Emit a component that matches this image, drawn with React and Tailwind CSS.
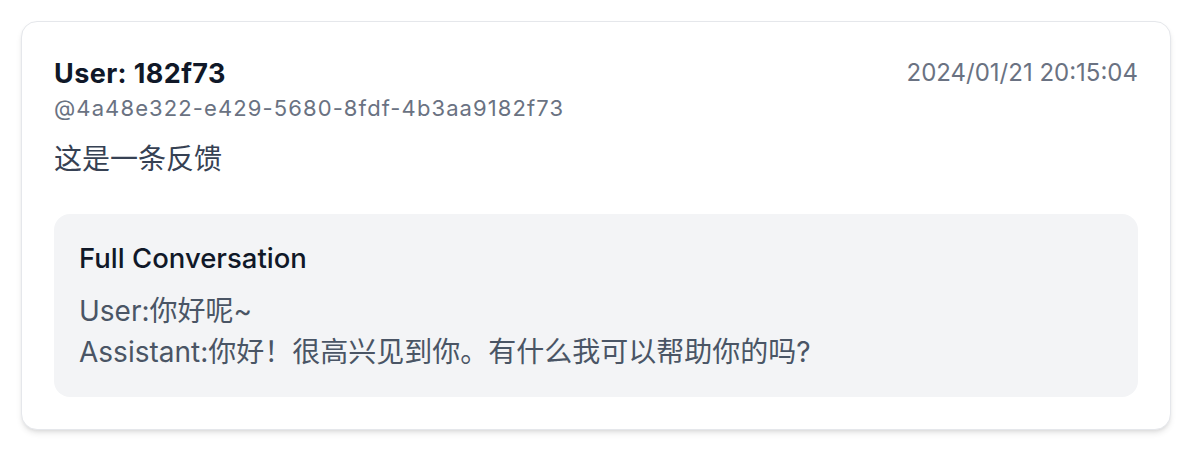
import React from 'react';

const feedback = {
    userName: 'User: 182f73',
    userId: '@4a48e322-e429-5680-8fdf-4b3aa9182f73',
    time: '2024/01/21 20:15:04',
    content: '这是一条反馈',
    conversation: ['User:你好呢~', 'Assistant:你好！很高兴见到你。有什么我可以帮助你的吗?']
};

export default function App() {
    return (
        <div className="min-h-screen bg-white p-[21px] font-['Inter','Noto_Sans_CJK_SC',sans-serif]">
            <div className="rounded-2xl border border-gray-200 bg-white px-8 pt-8 pb-8 shadow-md">
                <div className="flex items-start justify-between gap-4">
                    <div>
                        <h3 className="text-[27px] font-bold leading-[40px] tracking-[0.4px] text-gray-900">{feedback.userName}</h3>
                        <p className="text-[22px] leading-[28px] tracking-[1.1px] text-gray-500">{feedback.userId}</p>
                    </div>
                    <span className="text-[24px] leading-[38px] text-gray-500">{feedback.time}</span>
                </div>

                <p className="mt-4 text-[28px] leading-[42px] text-gray-700">{feedback.content}</p>

                <div className="mt-[34px] rounded-2xl bg-gray-100 px-[25px] pt-6 pb-6">
                    <h4 className="text-[27.5px] font-medium leading-[40px] text-gray-900">Full Conversation</h4>
                    <div className="mt-[13px] text-[28px] leading-[41px] text-gray-600">
                        {feedback.conversation.map((line) => (
                            <p key={line}>{line}</p>
                        ))}
                    </div>
                </div>
            </div>
        </div>
    );
}
